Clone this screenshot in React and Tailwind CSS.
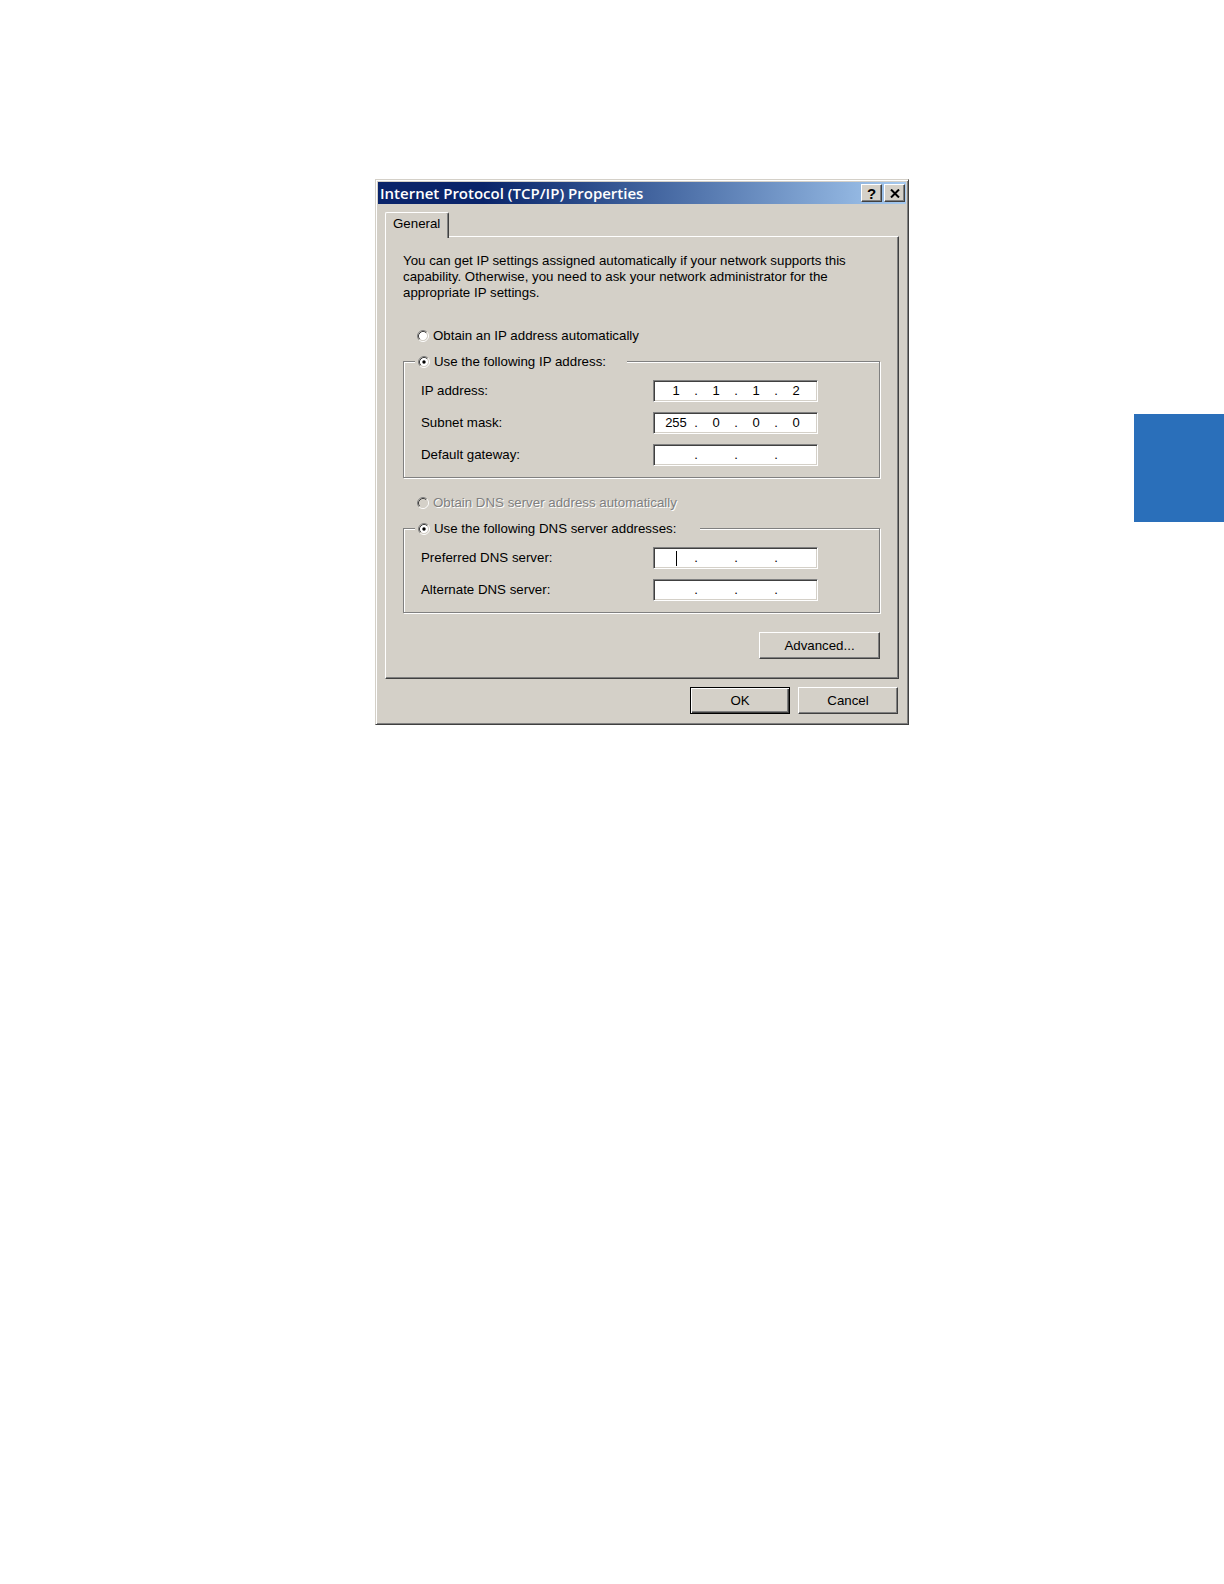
import React from "react";

const ui = { fontFamily: '"Liberation Sans", Arial, sans-serif' };

function Radio({ checked, disabled }) {
  return (
    <svg width="12" height="12" viewBox="0 0 12 12" className="shrink-0">
      <circle cx="6" cy="6" r="4.2" fill={disabled ? "#d4d0c8" : "#ffffff"} />
      <path d="M2.11 9.89 A5.5 5.5 0 0 1 9.89 2.11" fill="none" stroke="#808080" strokeWidth="1" />
      <path d="M9.89 2.11 A5.5 5.5 0 0 1 2.11 9.89" fill="none" stroke="#ffffff" strokeWidth="1" />
      <path d="M2.82 9.18 A4.5 4.5 0 0 1 9.18 2.82" fill="none" stroke="#404040" strokeWidth="1" />
      <path d="M9.18 2.82 A4.5 4.5 0 0 1 2.82 9.18" fill="none" stroke="#d4d0c8" strokeWidth="1" />
      {checked && <circle cx="6" cy="6" r="1.7" fill={disabled ? "#808080" : "#000000"} />}
    </svg>
  );
}

function IpBox({ values, cursor }) {
  const v = values || ["", "", "", ""];
  return (
    <div className="w-[165px] h-[22px] bg-white border border-t-[#808080] border-l-[#808080] border-b-white border-r-white shadow-[inset_1px_1px_#404040,inset_-1px_-1px_#d4d0c8] flex items-center pl-[2px] text-[13px] text-black">
      {v.map((x, i) => (
        <React.Fragment key={i}>
          <div className="w-[40px] h-full flex items-center justify-center relative">
            {i === 0 && cursor ? <div className="w-px h-[15px] bg-black" /> : x}
          </div>
          {i < 3 && (
            <div className="w-0 h-full flex items-center justify-center">
              <span className="text-[#000]">.</span>
            </div>
          )}
        </React.Fragment>
      ))}
    </div>
  );
}

function Row({ label, children }) {
  return (
    <div className="flex items-center h-[22px]">
      <div className="w-[232px] text-[13.3px] leading-[16px] text-black">{label}</div>
      {children}
    </div>
  );
}

function RadioRow({ checked, disabled, label }) {
  return (
    <div className="flex items-center h-[16px] pl-[14px] gap-[2px]">
      <Radio checked={checked} disabled={disabled} />
      <span
        className={
          "text-[13.3px] leading-[16px] pl-[2px] " +
          (disabled ? "text-[#808080] [text-shadow:1px_1px_0_#ffffff]" : "text-black")
        }
      >
        {label}
      </span>
    </div>
  );
}

function Group({ legend, legendWidth, children, className }) {
  return (
    <div
      className={
        "relative border border-[#808080] shadow-[1px_1px_0_#ffffff,inset_1px_1px_0_#ffffff] " +
        (className || "")
      }
    >
      <div
        className="absolute left-[11px] top-[-8px] bg-[#d4d0c8] flex items-center h-[16px] pl-[3px]"
        style={{ width: legendWidth }}
      >
        <Radio checked />
        <span className="text-[13.3px] leading-[16px] pl-[4px] text-black">{legend}</span>
      </div>
      {children}
    </div>
  );
}

function Button({ children, def, className }) {
  return (
    <div
      className={
        "flex items-center justify-center text-[13.3px] text-black bg-[#d4d0c8] " +
        (def
          ? "border border-black shadow-[inset_1px_1px_#ffffff,inset_-1px_-1px_#404040,inset_-2px_-2px_#808080] "
          : "border border-t-white border-l-white border-r-[#404040] border-b-[#404040] shadow-[inset_-1px_-1px_#808080] ") +
        (className || "")
      }
    >
      {children}
    </div>
  );
}

function TitleButton({ children }) {
  return (
    <div className="w-[21px] h-[18px] bg-[#d4d0c8] border border-t-white border-l-white border-r-[#404040] border-b-[#404040] shadow-[inset_-1px_-1px_#808080] flex items-center justify-center">
      {children}
    </div>
  );
}

export default function App() {
  return (
    <div className="relative w-[1224px] h-[1584px] bg-white overflow-hidden" style={ui}>
      <div className="absolute top-[414px] right-0 w-[90px] h-[108px] bg-[#2a6fba]" />

      <div className="pt-[179px] pl-[375px]">
        <div className="w-[534px] h-[546px] bg-[#d4d0c8] border border-t-[#d4d0c8] border-l-[#d4d0c8] border-r-[#404040] border-b-[#404040] shadow-[inset_1px_1px_#ffffff,inset_-1px_-1px_#808080] p-[2px] flex flex-col">
          {/* Title bar */}
          <div className="h-[22px] flex items-center bg-gradient-to-r from-[#0a246a] from-[20%] to-[#a6caf0] pl-[2px] pr-[1px]">
            <span
              className="text-white text-[15px] font-semibold leading-none flex-1"
              style={{ fontFamily: '"Open Sans", "DejaVu Sans", sans-serif' }}
            >
              Internet Protocol (TCP/IP) Properties
            </span>
            <div className="flex gap-[2px]">
              <TitleButton>
                <span className="text-[15px] font-bold leading-none text-black" style={{ fontFamily: '"Liberation Sans", Arial, sans-serif' }}>?</span>
              </TitleButton>
              <TitleButton>
                <svg width="10" height="9" viewBox="0 0 10 9">
                  <path d="M1 0.5 L9 8.5 M9 0.5 L1 8.5" stroke="#000" strokeWidth="2" />
                </svg>
              </TitleButton>
            </div>
          </div>

          {/* Tabs */}
          <div className="mt-[8px] px-[7px] flex flex-col">
            <div className="flex">
              <div className="relative z-10 w-[64px] h-[26px] -mb-[2px] bg-[#d4d0c8] border-l border-t border-l-white border-t-white border-r border-r-[#404040] shadow-[inset_-1px_0_#808080] rounded-tl-[2px] rounded-tr-[2px] flex items-start pt-[3px] pl-[7px]">
                <span className="text-[13.3px] leading-[16px] text-black">General</span>
              </div>
            </div>
            <div className="h-[443px] border border-t-white border-l-white border-r-[#404040] border-b-[#404040] shadow-[inset_-1px_-1px_#808080] pt-[16px] pl-[17px] pr-[18px] flex flex-col">
              <p className="text-[13.3px] leading-[16px] text-black">
                You can get IP settings assigned automatically if your network supports this
                <br />
                capability. Otherwise, you need to ask your network administrator for the
                <br />
                appropriate IP settings.
              </p>

              <div className="mt-[27px]">
                <RadioRow label="Obtain an IP address automatically" />
              </div>

              <Group
                legend="Use the following IP address:"
                legendWidth={212}
                className="mt-[17px] h-[117px] pt-[18px] pl-[17px] flex flex-col gap-[10px]"
              >
                <Row label="IP address:">
                  <IpBox values={["1", "1", "1", "2"]} />
                </Row>
                <Row label="Subnet mask:">
                  <IpBox values={["255", "0", "0", "0"]} />
                </Row>
                <Row label="Default gateway:">
                  <IpBox />
                </Row>
              </Group>

              <div className="mt-[17px]">
                <RadioRow disabled label="Obtain DNS server address automatically" />
              </div>

              <Group
                legend="Use the following DNS server addresses:"
                legendWidth={285}
                className="mt-[17px] h-[85px] pt-[18px] pl-[17px] flex flex-col gap-[10px]"
              >
                <Row label="Preferred DNS server:">
                  <IpBox cursor />
                </Row>
                <Row label="Alternate DNS server:">
                  <IpBox />
                </Row>
              </Group>

              <div className="mt-[19px] flex justify-end">
                <Button className="w-[121px] h-[27px]">Advanced...</Button>
              </div>
            </div>
          </div>

          {/* Bottom buttons */}
          <div className="mt-[8px] pr-[8px] flex justify-end gap-[8px]">
            <Button def className="w-[100px] h-[27px]">OK</Button>
            <Button className="w-[100px] h-[27px]">Cancel</Button>
          </div>
        </div>
      </div>
    </div>
  );
}
